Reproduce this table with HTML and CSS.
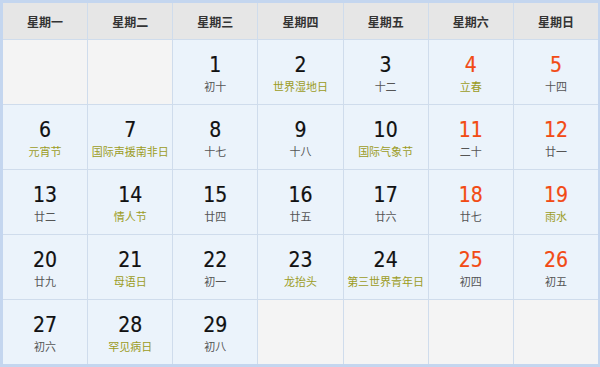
FILE: index.html
```html
<!DOCTYPE html>
<html lang="zh">
<head>
<meta charset="utf-8">
<link rel="stylesheet" href="styles.css">
</head>
<body>
<div class="cal">
  <div class="hd">星期一</div>
  <div class="hd">星期二</div>
  <div class="hd">星期三</div>
  <div class="hd">星期四</div>
  <div class="hd">星期五</div>
  <div class="hd">星期六</div>
  <div class="hd">星期日</div>

  <div class="cell empty"></div>
  <div class="cell empty"></div>
  <div class="cell"><span class="num">1</span><span class="lun">初十</span></div>
  <div class="cell"><span class="num">2</span><span class="lun fest">世界湿地日</span></div>
  <div class="cell"><span class="num">3</span><span class="lun">十二</span></div>
  <div class="cell"><span class="num wk">4</span><span class="lun fest">立春</span></div>
  <div class="cell"><span class="num wk">5</span><span class="lun">十四</span></div>

  <div class="cell"><span class="num">6</span><span class="lun fest">元宵节</span></div>
  <div class="cell"><span class="num">7</span><span class="lun fest">国际声援南非日</span></div>
  <div class="cell"><span class="num">8</span><span class="lun">十七</span></div>
  <div class="cell"><span class="num">9</span><span class="lun">十八</span></div>
  <div class="cell"><span class="num">10</span><span class="lun fest">国际气象节</span></div>
  <div class="cell"><span class="num wk">11</span><span class="lun">二十</span></div>
  <div class="cell"><span class="num wk">12</span><span class="lun">廿一</span></div>

  <div class="cell"><span class="num">13</span><span class="lun">廿二</span></div>
  <div class="cell"><span class="num">14</span><span class="lun fest">情人节</span></div>
  <div class="cell"><span class="num">15</span><span class="lun">廿四</span></div>
  <div class="cell"><span class="num">16</span><span class="lun">廿五</span></div>
  <div class="cell"><span class="num">17</span><span class="lun">廿六</span></div>
  <div class="cell"><span class="num wk">18</span><span class="lun">廿七</span></div>
  <div class="cell"><span class="num wk">19</span><span class="lun fest">雨水</span></div>

  <div class="cell"><span class="num">20</span><span class="lun">廿九</span></div>
  <div class="cell"><span class="num">21</span><span class="lun fest">母语日</span></div>
  <div class="cell"><span class="num">22</span><span class="lun">初一</span></div>
  <div class="cell"><span class="num">23</span><span class="lun fest">龙抬头</span></div>
  <div class="cell"><span class="num">24</span><span class="lun fest">第三世界青年日</span></div>
  <div class="cell"><span class="num wk">25</span><span class="lun">初四</span></div>
  <div class="cell"><span class="num wk">26</span><span class="lun">初五</span></div>

  <div class="cell"><span class="num">27</span><span class="lun">初六</span></div>
  <div class="cell"><span class="num">28</span><span class="lun fest">罕见病日</span></div>
  <div class="cell"><span class="num">29</span><span class="lun">初八</span></div>
  <div class="cell empty"></div>
  <div class="cell empty"></div>
  <div class="cell empty"></div>
  <div class="cell empty"></div>
</div>
</body>
</html>
```
FILE: styles.css
```css
html, body {
  margin: 0;
  padding: 0;
  background: #ffffff;
}
.cal {
  box-sizing: border-box;
  width: 600px;
  height: 367px;
  border-style: solid;
  border-color: #c4d6ef;
  border-width: 3px 2px 3px 3px;
  display: grid;
  grid-template-columns: repeat(7, 1fr);
  grid-template-rows: 36px repeat(5, 64px);
  gap: 1px;
  background: #cfdcec;
  font-family: "Noto Sans CJK SC", sans-serif;
}
.hd {
  background: #e6e6e6;
  color: #333333;
  font-size: 12px;
  font-weight: bold;
  display: flex;
  align-items: center;
  justify-content: center;
}
.cell {
  background: #ebf3fb;
  display: flex;
  flex-direction: column;
  align-items: center;
  justify-content: center;
  padding-top: 2px;
}
.cell.empty {
  background: #f4f4f4;
}
.num {
  font-family: "DejaVu Sans Condensed", "DejaVu Sans", sans-serif;
  font-size: 21px;
  line-height: 26px;
  color: #111111;
  -webkit-text-stroke: 0.2px #111111;
}
.num.wk {
  color: #f24a14;
  -webkit-text-stroke: 0.2px #f24a14;
}
.lun {
  font-size: 11px;
  line-height: 16px;
  color: #555555;
}
.lun.fest {
  color: #9c9c1e;
}
```
